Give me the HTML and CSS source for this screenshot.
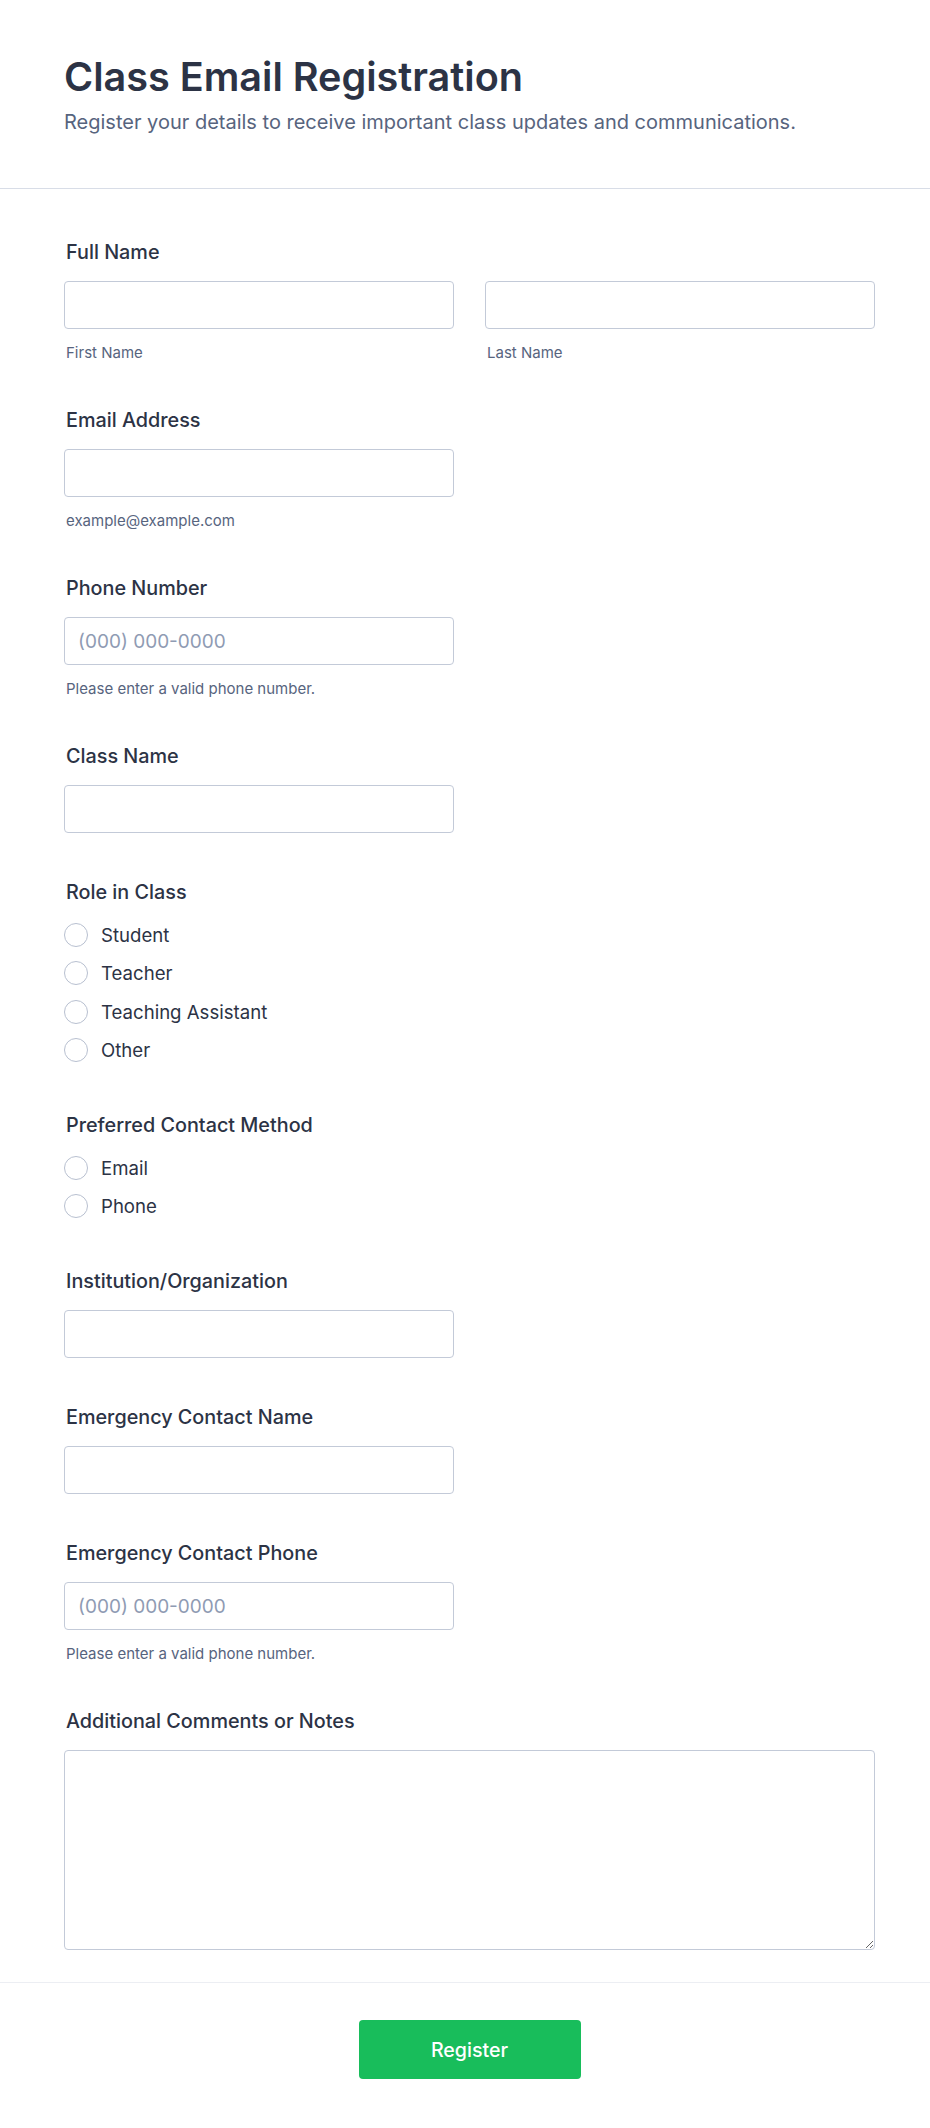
FILE: index.html
```html
<!DOCTYPE html>
<html lang="en">
<head>
<meta charset="utf-8">
<title>Class Email Registration</title>
<link rel="stylesheet" href="styles.css">
</head>
<body>
<div class="page">
  <header class="header">
    <h1 class="title">Class Email Registration</h1>
    <p class="subtitle">Register your details to receive important class updates and communications.</p>
  </header>

  <form class="form">
    <div class="field">
      <label class="label">Full Name</label>
      <div class="grid">
        <div class="cell">
          <input class="input" type="text">
          <div class="sublabel">First Name</div>
        </div>
        <div class="cell">
          <input class="input" type="text">
          <div class="sublabel">Last Name</div>
        </div>
      </div>
    </div>

    <div class="field">
      <label class="label">Email Address</label>
      <div class="grid">
        <div class="cell">
          <input class="input" type="email">
          <div class="sublabel">example@example.com</div>
        </div>
      </div>
    </div>

    <div class="field">
      <label class="label">Phone Number</label>
      <div class="grid">
        <div class="cell">
          <input class="input" type="tel" placeholder="(000) 000-0000">
          <div class="sublabel">Please enter a valid phone number.</div>
        </div>
      </div>
    </div>

    <div class="field">
      <label class="label">Class Name</label>
      <div class="grid">
        <div class="cell">
          <input class="input" type="text">
        </div>
      </div>
    </div>

    <div class="field">
      <label class="label">Role in Class</label>
      <div class="radios">
        <label class="radio"><input class="radio-input" type="radio" name="role"><span class="radio-text">Student</span></label>
        <label class="radio"><input class="radio-input" type="radio" name="role"><span class="radio-text">Teacher</span></label>
        <label class="radio"><input class="radio-input" type="radio" name="role"><span class="radio-text">Teaching Assistant</span></label>
        <label class="radio"><input class="radio-input" type="radio" name="role"><span class="radio-text">Other</span></label>
      </div>
    </div>

    <div class="field">
      <label class="label">Preferred Contact Method</label>
      <div class="radios">
        <label class="radio"><input class="radio-input" type="radio" name="contact"><span class="radio-text">Email</span></label>
        <label class="radio"><input class="radio-input" type="radio" name="contact"><span class="radio-text">Phone</span></label>
      </div>
    </div>

    <div class="field">
      <label class="label">Institution/Organization</label>
      <div class="grid">
        <div class="cell">
          <input class="input" type="text">
        </div>
      </div>
    </div>

    <div class="field">
      <label class="label">Emergency Contact Name</label>
      <div class="grid">
        <div class="cell">
          <input class="input" type="text">
        </div>
      </div>
    </div>

    <div class="field">
      <label class="label">Emergency Contact Phone</label>
      <div class="grid">
        <div class="cell">
          <input class="input" type="tel" placeholder="(000) 000-0000">
          <div class="sublabel">Please enter a valid phone number.</div>
        </div>
      </div>
    </div>

    <div class="field field-last">
      <label class="label">Additional Comments or Notes</label>
      <textarea class="textarea"></textarea>
    </div>
  </form>

  <footer class="footer">
    <button class="button" type="button">Register</button>
  </footer>
</div>
</body>
</html>
```

FILE: styles.css
```css
* {
  box-sizing: border-box;
}

html, body {
  margin: 0;
  padding: 0;
  background: #ffffff;
}

body {
  font-family: Inter, "Noto Sans", "Liberation Sans", sans-serif;
  color: #2c3345;
}

.page {
  width: 930px;
}

.header {
  padding: 54px 55px 53px 64px;
  border-bottom: 1px solid #d8dde7;
}

.title {
  margin: 0 0 9px 0;
  font-size: 39.6px;
  line-height: 46px;
  font-weight: 600;
  color: #2c3345;
}

.subtitle {
  margin: 0;
  font-size: 20px;
  line-height: 26px;
  font-weight: 400;
  color: #57647e;
}

.form {
  padding: 52px 55px 32px 64px;
  display: flex;
  flex-direction: column;
  gap: 48px;
}

.field {
  display: flex;
  flex-direction: column;
}

.label {
  display: block;
  font-size: 19.8px;
  line-height: 22px;
  font-weight: 500;
  color: #2c3345;
  margin: 0 0 18px 2px;
}

.grid {
  display: grid;
  grid-template-columns: 1fr 1fr;
  column-gap: 31px;
}

.cell {
  display: flex;
  flex-direction: column;
}

.input {
  display: block;
  width: 100%;
  height: 48px;
  margin: 0;
  padding: 0 13px;
  border: 1px solid #c3cad8;
  border-radius: 4px;
  background: #ffffff;
  font-family: Inter, "Noto Sans", "Liberation Sans", sans-serif;
  font-size: 19px;
  color: #2c3345;
  outline: none;
}

.input::placeholder {
  color: #8f9bb3;
  opacity: 1;
}

.sublabel {
  margin: 15px 0 0 2px;
  font-size: 15px;
  line-height: 17px;
  color: #57647e;
}

.radios {
  display: flex;
  flex-direction: column;
  gap: 14.33px;
  margin-top: 2px;
  padding-bottom: 4px;
}

.radio {
  display: flex;
  align-items: center;
  height: 24px;
  gap: 13px;
  cursor: pointer;
}

.radio-input {
  -webkit-appearance: none;
  appearance: none;
  width: 24px;
  height: 24px;
  margin: 0;
  border: 1px solid #b8c0d0;
  border-radius: 50%;
  background: #ffffff;
  flex: 0 0 auto;
}

.radio-text {
  font-size: 18.6px;
  line-height: 24px;
  color: #2c3345;
}

.textarea {
  display: block;
  width: 100%;
  height: 200px;
  margin: 0;
  padding: 12px 13px;
  border: 1px solid #c3cad8;
  border-radius: 4px;
  font-family: Inter, "Noto Sans", "Liberation Sans", sans-serif;
  font-size: 18px;
  resize: vertical;
  outline: none;
}

.footer {
  border-top: 1px solid #eceef3;
  padding: 37px 55px 50px 64px;
  display: flex;
  justify-content: center;
}

.button {
  width: 222px;
  height: 59px;
  border: none;
  border-radius: 4px;
  background: #18bd5b;
  color: #ffffff;
  font-family: Inter, "Noto Sans", "Liberation Sans", sans-serif;
  font-size: 19.6px;
  font-weight: 500;
  cursor: pointer;
}
```
